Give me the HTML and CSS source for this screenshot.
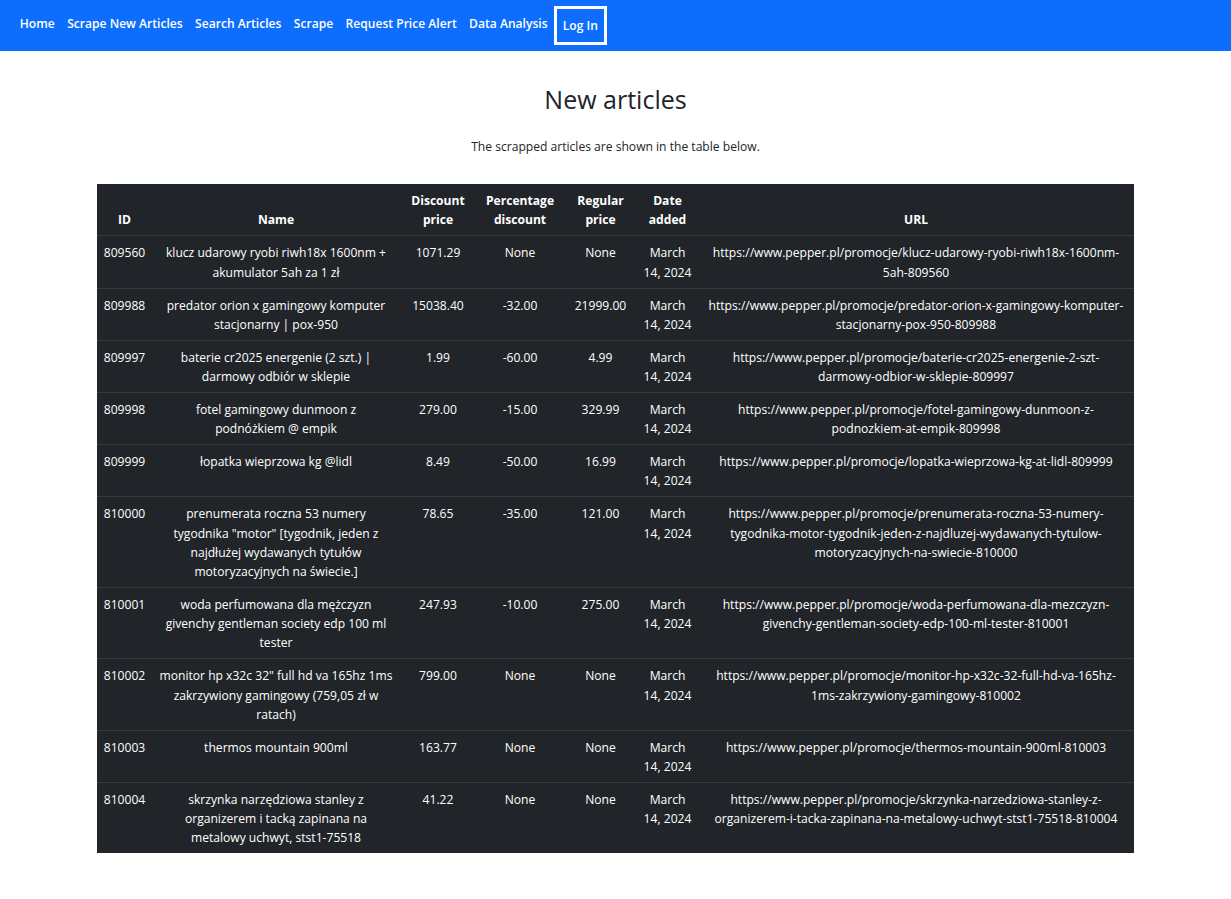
FILE: index.html
```html
<!DOCTYPE html>
<html lang="pl">
<head>
<meta charset="utf-8">
<title>New articles</title>
<link rel="stylesheet" href="styles.css">
</head>
<body>
<nav class="navbar">
  <ul class="nav">
    <li><a class="nav-link" href="#">Home</a></li>
    <li><a class="nav-link" href="#">Scrape New Articles</a></li>
    <li><a class="nav-link" href="#">Search Articles</a></li>
    <li><a class="nav-link" href="#">Scrape</a></li>
    <li><a class="nav-link" href="#">Request Price Alert</a></li>
    <li><a class="nav-link" href="#">Data Analysis</a></li>
    <li><a class="nav-link login" href="#">Log In</a></li>
  </ul>
</nav>
<main class="container">
  <h1 class="title">New articles</h1>
  <p class="lead">The scrapped articles are shown in the table below.</p>
  <table class="table">
    <colgroup>
      <col class="c-id"><col class="c-name"><col class="c-disc"><col class="c-pct"><col class="c-reg"><col class="c-date"><col class="c-url">
    </colgroup>
    <thead>
      <tr><th>ID</th><th>Name</th><th>Discount price</th><th>Percentage discount</th><th>Regular price</th><th>Date added</th><th>URL</th></tr>
    </thead>
    <tbody>
      <tr><td>809560</td><td>klucz udarowy ryobi riwh18x 1600nm + akumulator 5ah za 1 zł</td><td>1071.29</td><td>None</td><td>None</td><td>March 14, 2024</td><td>https://www.pepper.pl/promocje/klucz-udarowy-ryobi-riwh18x-1600nm-5ah-809560</td></tr>
      <tr><td>809988</td><td>predator orion x gamingowy komputer stacjonarny | pox-950</td><td>15038.40</td><td>-32.00</td><td>21999.00</td><td>March 14, 2024</td><td>https://www.pepper.pl/promocje/predator-orion-x-gamingowy-komputer-stacjonarny-pox-950-809988</td></tr>
      <tr><td>809997</td><td>baterie cr2025 energenie (2 szt.) | darmowy odbiór w sklepie</td><td>1.99</td><td>-60.00</td><td>4.99</td><td>March 14, 2024</td><td>https://www.pepper.pl/promocje/baterie-cr2025-energenie-2-szt-darmowy-odbior-w-sklepie-809997</td></tr>
      <tr><td>809998</td><td>fotel gamingowy dunmoon z<br>podnóżkiem @ empik</td><td>279.00</td><td>-15.00</td><td>329.99</td><td>March 14, 2024</td><td>https://www.pepper.pl/promocje/fotel-gamingowy-dunmoon-z-podnozkiem-at-empik-809998</td></tr>
      <tr><td>809999</td><td>łopatka wieprzowa kg @lidl</td><td>8.49</td><td>-50.00</td><td>16.99</td><td>March 14, 2024</td><td>https://www.pepper.pl/promocje/lopatka-wieprzowa-kg-at-lidl-809999</td></tr>
      <tr><td>810000</td><td>prenumerata roczna 53 numery tygodnika "motor" [tygodnik, jeden z najdłużej wydawanych tytułów motoryzacyjnych na świecie.]</td><td>78.65</td><td>-35.00</td><td>121.00</td><td>March 14, 2024</td><td>https://www.pepper.pl/promocje/prenumerata-roczna-53-numery-tygodnika-motor-tygodnik-jeden-z-najdluzej-wydawanych-tytulow-motoryzacyjnych-na-swiecie-810000</td></tr>
      <tr><td>810001</td><td>woda perfumowana dla mężczyzn givenchy gentleman society edp 100 ml tester</td><td>247.93</td><td>-10.00</td><td>275.00</td><td>March 14, 2024</td><td>https://www.pepper.pl/promocje/woda-perfumowana-dla-mezczyzn-givenchy-gentleman-society-edp-100-ml-tester-810001</td></tr>
      <tr><td>810002</td><td>monitor hp x32c 32" full hd va 165hz 1ms zakrzywiony gamingowy (759,05 zł w ratach)</td><td>799.00</td><td>None</td><td>None</td><td>March 14, 2024</td><td>https://www.pepper.pl/promocje/monitor-hp-x32c-32-full-hd-va-165hz-1ms-zakrzywiony-gamingowy-810002</td></tr>
      <tr><td>810003</td><td>thermos mountain 900ml</td><td>163.77</td><td>None</td><td>None</td><td>March 14, 2024</td><td>https://www.pepper.pl/promocje/thermos-mountain-900ml-810003</td></tr>
      <tr><td>810004</td><td>skrzynka narzędziowa stanley z organizerem i tacką zapinana na metalowy uchwyt, stst1-75518</td><td>41.22</td><td>None</td><td>None</td><td>March 14, 2024</td><td>https://www.pepper.pl/promocje/skrzynka-narzedziowa-stanley-z-organizerem-i-tacka-zapinana-na-metalowy-uchwyt-stst1-75518-810004</td></tr>
    </tbody>
  </table>
</main>
</body>
</html>
```
FILE: styles.css
```css
* { box-sizing: border-box; }
html, body {
  margin: 0;
  padding: 0;
  background: #ffffff;
  color: #212529;
  font-family: "Open Sans", "Noto Sans", sans-serif;
  font-size: 12.1px;
  line-height: 19.2px;
}
.navbar {
  background: #0d6efd;
  height: 51px;
  padding: 0 13.6px;
  display: flex;
  align-items: center;
}
.nav {
  list-style: none;
  margin: 0;
  padding: 0;
  display: flex;
  align-items: center;
}
.nav-link {
  display: block;
  color: #ffffff;
  text-decoration: none;
  font-weight: 600;
  padding: 0 6.2px;
  margin-top: -4px;
  line-height: 19.2px;
}
.nav-link.login {
  border: 3px solid #ffffff;
  padding: 7px 6px 6px;
  margin-top: 0;
  line-height: 19.2px;
}
.container {
  width: 1037px;
  margin: 0 auto;
  padding: 0;
}
.title {
  text-align: center;
  font-size: 25px;
  font-weight: 500;
  line-height: 30px;
  margin: 33px 0 0;
}
.lead {
  text-align: center;
  margin: 23px 0 28px;
  line-height: 19.2px;
}
.table {
  width: 1037px;
  border-collapse: collapse;
  table-layout: fixed;
  background: #212529;
  color: #ffffff;
}
.c-id { width: 55px; }
.c-name { width: 248px; }
.c-disc { width: 76px; }
.c-pct { width: 88px; }
.c-reg { width: 73px; }
.c-date { width: 61px; }
.c-url { width: 436px; }
.table th, .table td {
  padding: 7px 6.4px 5.8px;
  text-align: center;
  line-height: 19.2px;
  border-bottom: 1px solid #373b3e;
  vertical-align: top;
}
.table th {
  font-weight: 700;
  vertical-align: bottom;
}
.table tbody tr:last-child td { border-bottom: 0; }
```
